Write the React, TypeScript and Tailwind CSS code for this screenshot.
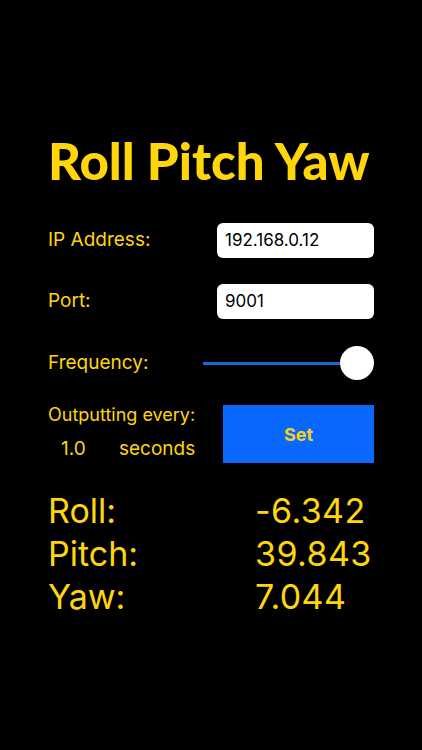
import React from "react";

const yellow = "text-[#FFD60A]";

function Field({ label, value }: { label: string; value: string }) {
  return (
    <div className="flex h-[35px] items-center justify-between">
      <span className={`text-[19px] ${yellow}`}>{label}</span>
      <div className="flex h-[35px] w-[157px] items-center rounded-[6px] bg-white px-[8px] text-[17px] text-black">
        {value}
      </div>
    </div>
  );
}

function Reading({ label, value }: { label: string; value: string }) {
  return (
    <div className={`flex h-[43px] items-center text-[34px] leading-none ${yellow}`}>
      <span className="w-[207px]">{label}</span>
      <span className="tracking-[0.4px]">{value}</span>
    </div>
  );
}

export default function App() {
  return (
    <div
      className="h-[750px] w-[422px] bg-black px-[48px]"
      style={{ fontFamily: "Inter, 'Noto Sans', sans-serif" }}
    >
      <h1
        className={`whitespace-nowrap pt-[133px] text-[51px] font-black leading-[55px] ${yellow}`}
        style={{ fontFamily: "Lato, sans-serif" }}
      >
        Roll Pitch Yaw
      </h1>

      <div className="mt-[35px] flex flex-col gap-[26px]">
        <Field label="IP Address:" value="192.168.0.12" />
        <Field label="Port:" value="9001" />
      </div>

      <div className="mt-[27px] flex h-[34px] items-center justify-between">
        <span className={`text-[19px] ${yellow}`}>Frequency:</span>
        <div className="flex w-[171px] items-center">
          <div className="h-[3px] flex-1 bg-[#1868DC]" />
          <div className="h-[34px] w-[34px] rounded-full bg-white" />
        </div>
      </div>

      <div className="mt-[25px] flex h-[58px] items-center justify-between">
        <div className={`flex flex-col leading-[34px] ${yellow}`}>
          <span className="-mt-[4px] text-[18px]">Outputting every:</span>
          <span className="flex text-[19px]">
            <span className="ml-[13px] w-[58px]">1.0</span>
            <span>seconds</span>
          </span>
        </div>
        <button className="flex h-[58px] w-[151px] items-center justify-center bg-[#0A68FF] text-[18px] font-bold text-[#F2D41C]">
          Set
        </button>
      </div>

      <div className="mt-[26px] flex flex-col">
        <Reading label="Roll:" value="-6.342" />
        <Reading label="Pitch:" value="39.843" />
        <Reading label="Yaw:" value="7.044" />
      </div>
    </div>
  );
}
